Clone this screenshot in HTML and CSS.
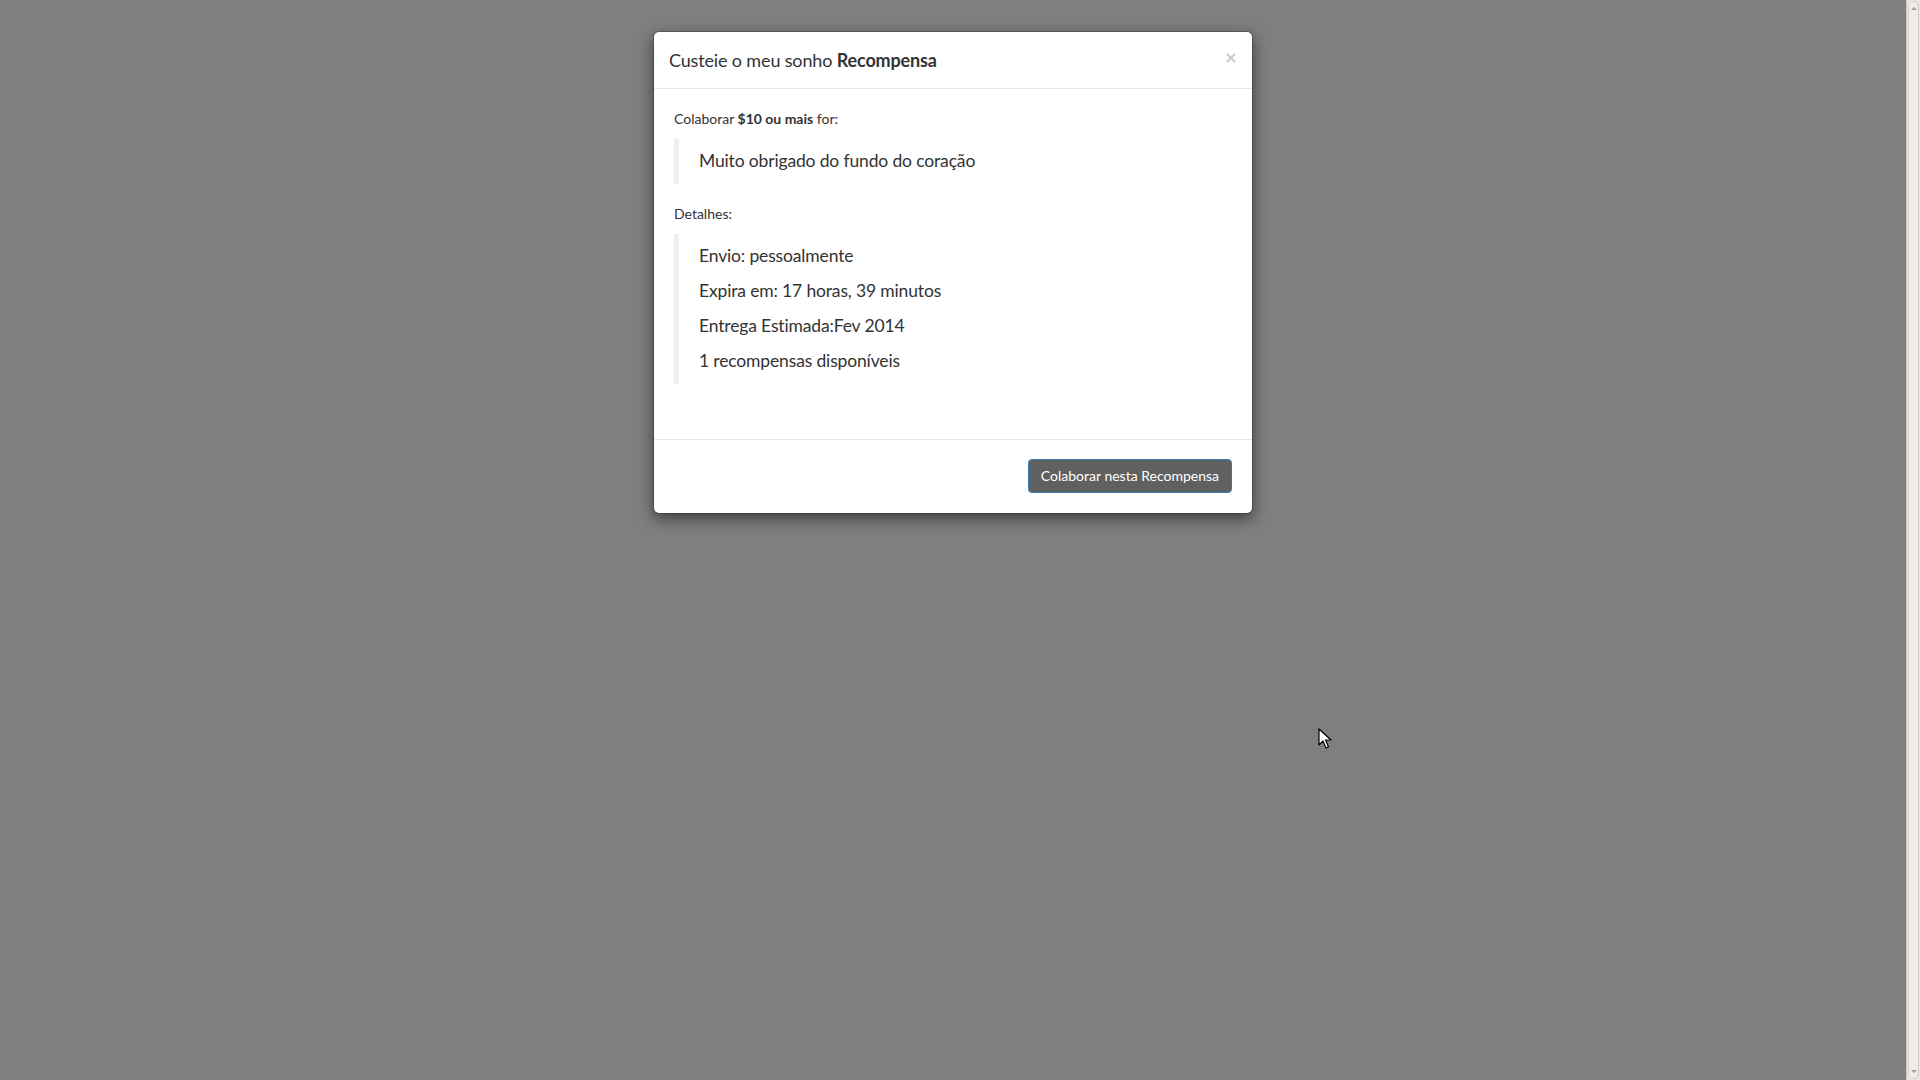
FILE: index.html
```html
<!DOCTYPE html>
<html lang="pt">
<head>
<meta charset="utf-8">
<title>Recompensa</title>
<link rel="stylesheet" href="styles.css">
</head>
<body>
<div class="screen">
  <div class="backdrop">
    <div class="modal-dialog">
      <div class="modal-content">
        <div class="modal-header">
          <button class="close" type="button">×</button>
          <h4 class="modal-title">Custeie o meu sonho <strong>Recompensa</strong></h4>
        </div>
        <div class="modal-body">
          <p>Colaborar <strong>$10 ou mais</strong> for:</p>
          <blockquote>
            <p>Muito obrigado do fundo do coração</p>
          </blockquote>
          <p>Detalhes:</p>
          <blockquote>
            <p>Envio: pessoalmente</p>
            <p>Expira em: 17 horas, 39 minutos</p>
            <p>Entrega Estimada:Fev 2014</p>
            <p>1 recompensas disponíveis</p>
          </blockquote>
        </div>
        <div class="modal-footer">
          <button class="btn" type="button">Colaborar nesta Recompensa</button>
        </div>
      </div>
    </div>
    <svg class="cursor" width="14" height="22" viewBox="0 0 14 22" aria-hidden="true">
      <path d="M1 1 L1 17 L5 13 L8 20 L10.5 19 L7.5 12 L13 12 Z" fill="#fff" stroke="#000" stroke-width="1.2" stroke-linejoin="round"/>
    </svg>
  </div>
  <div class="scrollbar" aria-hidden="true">
    <div class="sb-thumb">
      <span class="sb-arrow up"></span>
      <span class="sb-arrow down"></span>
    </div>
  </div>
</div>
</body>
</html>
```
FILE: styles.css
```css
html, body {
  margin: 0;
  height: 100%;
  overflow: hidden;
}
body {
  font-family: Lato, "Open Sans", sans-serif;
  font-size: 14px;
  line-height: 1.428571;
  color: #333;
  background: #7f7f7f;
}
.screen {
  display: flex;
  height: 100vh;
}
.backdrop {
  position: relative;
  flex: 1;
  background: #7f7f7f;
}
.scrollbar {
  width: 11px;
  background: #e9e6e3;
  border-left: 1px solid #cdc8c3;
  display: flex;
  padding: 1px;
}
.sb-thumb {
  flex: 1;
  background: #efece9;
  border: 1px solid #d3cec9;
  border-radius: 6px;
  display: flex;
  flex-direction: column;
  justify-content: space-between;
  align-items: center;
  padding: 5px 0;
}
.sb-arrow {
  width: 0;
  height: 0;
  border-left: 3px solid transparent;
  border-right: 3px solid transparent;
}
.sb-arrow.up {
  border-bottom: 3px solid #a29d98;
}
.sb-arrow.down {
  border-top: 3px solid #a29d98;
}
.modal-dialog {
  width: 600px;
  margin: 31px auto;
}
.modal-content {
  background: #fff;
  border: 1px solid rgba(0, 0, 0, 0.2);
  border-radius: 6px;
  box-shadow: 0 5px 15px rgba(0, 0, 0, 0.5);
  background-clip: padding-box;
}
.modal-header {
  padding: 16px 15px 14px;
  border-bottom: 1px solid #e5e5e5;
  display: flex;
  flex-direction: row-reverse;
  justify-content: space-between;
  align-items: flex-start;
}
.modal-title {
  margin: 0;
  font-size: 18px;
  font-weight: 400;
  line-height: 1.428571;
  color: #333;
  letter-spacing: -0.15px;
}
.modal-title strong {
  font-weight: 700;
}
.close {
  padding: 0;
  margin-top: -2px;
  border: 0;
  background: transparent;
  font-family: Lato, sans-serif;
  font-size: 21px;
  font-weight: 700;
  line-height: 1;
  color: #000;
  opacity: 0.2;
}
.modal-body {
  padding: 20px;
}
.modal-body p {
  margin: 0 0 10px;
}
blockquote {
  margin: 0 0 20px;
  padding: 10px 20px;
  border-left: 5px solid #eee;
}
blockquote p {
  font-size: 17.5px;
  line-height: 1.428571;
  font-weight: 400;
  color: #333;
  letter-spacing: -0.15px;
}
.modal-body blockquote p:last-child {
  margin-bottom: 0;
}
.modal-footer {
  margin-top: 15px;
  padding: 19px 20px 20px;
  border-top: 1px solid #e5e5e5;
  text-align: right;
}
.btn {
  display: inline-block;
  padding: 6px 12px;
  font-family: Lato, sans-serif;
  font-size: 14px;
  line-height: 1.428571;
  color: #fff;
  background: #606060;
  border: 1px solid #3a78b8;
  border-radius: 4px;
}
.cursor {
  position: absolute;
  left: 1318px;
  top: 728px;
}
```
